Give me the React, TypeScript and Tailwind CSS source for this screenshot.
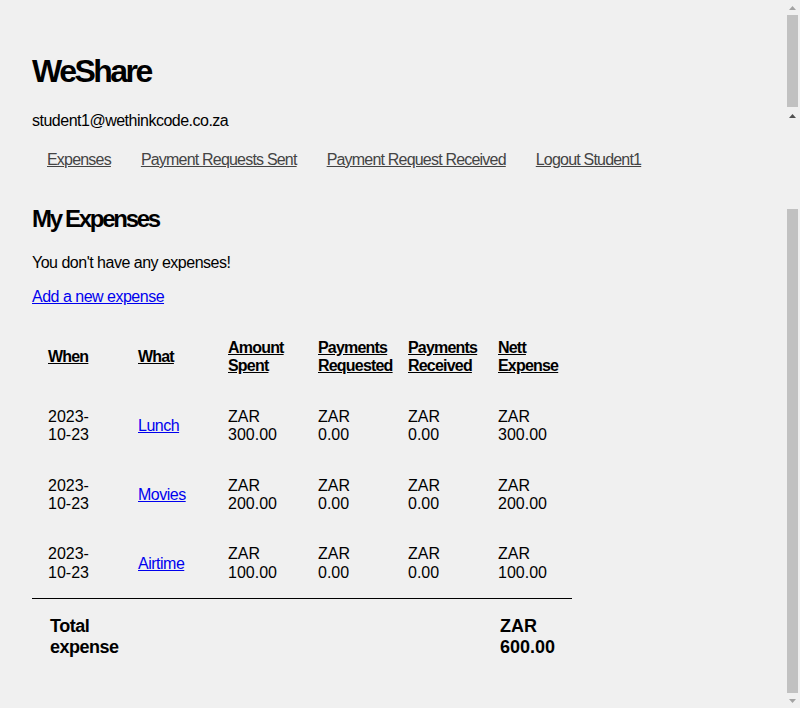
import React from "react";

type Row = { when: string; what: string; spent: string; req: string; rec: string; nett: string };

const rows: Row[] = [
  { when: "2023-10-23", what: "Lunch", spent: "ZAR 300.00", req: "ZAR 0.00", rec: "ZAR 0.00", nett: "ZAR 300.00" },
  { when: "2023-10-23", what: "Movies", spent: "ZAR 200.00", req: "ZAR 0.00", rec: "ZAR 0.00", nett: "ZAR 200.00" },
  { when: "2023-10-23", what: "Airtime", spent: "ZAR 100.00", req: "ZAR 0.00", rec: "ZAR 0.00", nett: "ZAR 100.00" },
];

function Arrow({ up, color }: { up: boolean; color: string }) {
  return (
    <svg width="7" height="4" viewBox="0 0 7 4">
      {up ? <polygon points="0,4 7,4 3.5,0" fill={color} /> : <polygon points="0,0 7,0 3.5,4" fill={color} />}
    </svg>
  );
}

function Scrollbar() {
  return (
    <div className="flex w-[15px] shrink-0 flex-col items-center">
      <div className="flex h-[15px] items-center justify-center">
        <Arrow up color="#a3a3a3" />
      </div>
      <div className="h-[92px] w-[11px] bg-[#c1c1c1]" />
      <div className="flex h-[17px] items-center justify-center">
        <Arrow up color="#505050" />
      </div>
      <div className="h-[85px]" />
      <div className="h-[484px] w-[11px] bg-[#c1c1c1]" />
      <div className="flex h-[15px] items-center justify-center">
        <Arrow up={false} color="#a3a3a3" />
      </div>
    </div>
  );
}

export default function App() {
  const th = "pl-4 pr-4 py-4 text-left align-middle font-bold tracking-[-0.8px]";
  const td = "pl-4 pr-4 py-4 text-left align-middle";
  return (
    <div
      className="flex h-[708px] w-[800px] overflow-hidden bg-[#f0f0f0] text-black"
      style={{ fontFamily: '"Liberation Sans", Arial, sans-serif' }}
    >
      <div className="flex flex-1 flex-col pl-8">
        <h1 className="mt-[53px] text-[32px] font-bold leading-[36px] tracking-[-2.5px]">WeShare</h1>
        <p className="mt-[23px] text-[16px] leading-[18px] tracking-[-0.5px]">student1@wethinkcode.co.za</p>
        <nav className="mt-[21px] flex gap-[30px] pl-[15px] text-[16px] leading-[18px] tracking-[-0.8px] text-[#444]">
          <a href="#" className="underline">Expenses</a>
          <a href="#" className="underline">Payment Requests Sent</a>
          <a href="#" className="underline">Payment Request Received</a>
          <a href="#" className="underline">Logout Student1</a>
        </nav>
        <h2 className="mt-[36px] text-[24px] font-bold leading-[28px] tracking-[-2.3px]">My Expenses</h2>
        <p className="mt-[21px] text-[16px] leading-[18px] tracking-[-0.5px]">You don't have any expenses!</p>
        <p className="mt-[16px] text-[16px] leading-[18px] tracking-[-0.5px]">
          <a href="#" className="text-[#0000ee] underline">Add a new expense</a>
        </p>
        <table className="mt-[17px] w-[540px] table-fixed border-collapse text-[16px] leading-[18.4px]">
          <colgroup>
            <col className="w-[90px]" />
            <col className="w-[90px]" />
            <col className="w-[90px]" />
            <col className="w-[90px]" />
            <col className="w-[90px]" />
            <col className="w-[90px]" />
          </colgroup>
          <thead>
            <tr>
              <th className={th}><span className="underline">When</span></th>
              <th className={th}><span className="underline">What</span></th>
              <th className={th}><span className="underline">Amount Spent</span></th>
              <th className={th}><span className="underline">Payments Requested</span></th>
              <th className={th}><span className="underline">Payments Received</span></th>
              <th className={th}><span className="underline">Nett Expense</span></th>
            </tr>
          </thead>
          <tbody>
            {rows.map((r) => (
              <tr key={r.what}>
                <td className={td}>{r.when}</td>
                <td className={td}>
                  <a href="#" className="text-[#0000ee] underline tracking-[-0.5px]">{r.what}</a>
                </td>
                <td className={td}>{r.spent}</td>
                <td className={td}>{r.req}</td>
                <td className={td}>{r.rec}</td>
                <td className={td}>{r.nett}</td>
              </tr>
            ))}
          </tbody>
          <tfoot>
            <tr className="border-t border-black">
              <td className="pl-[18px] pr-4 pt-[17px] pb-4 text-left align-top text-[18px] font-bold leading-[21px] tracking-[-0.5px]">
                Total expense
              </td>
              <td colSpan={4} />
              <td className="pl-[18px] pr-2 pt-[17px] pb-4 text-left align-top text-[18px] font-bold leading-[21px]">
                ZAR 600.00
              </td>
            </tr>
          </tfoot>
        </table>
      </div>
      <Scrollbar />
    </div>
  );
}
